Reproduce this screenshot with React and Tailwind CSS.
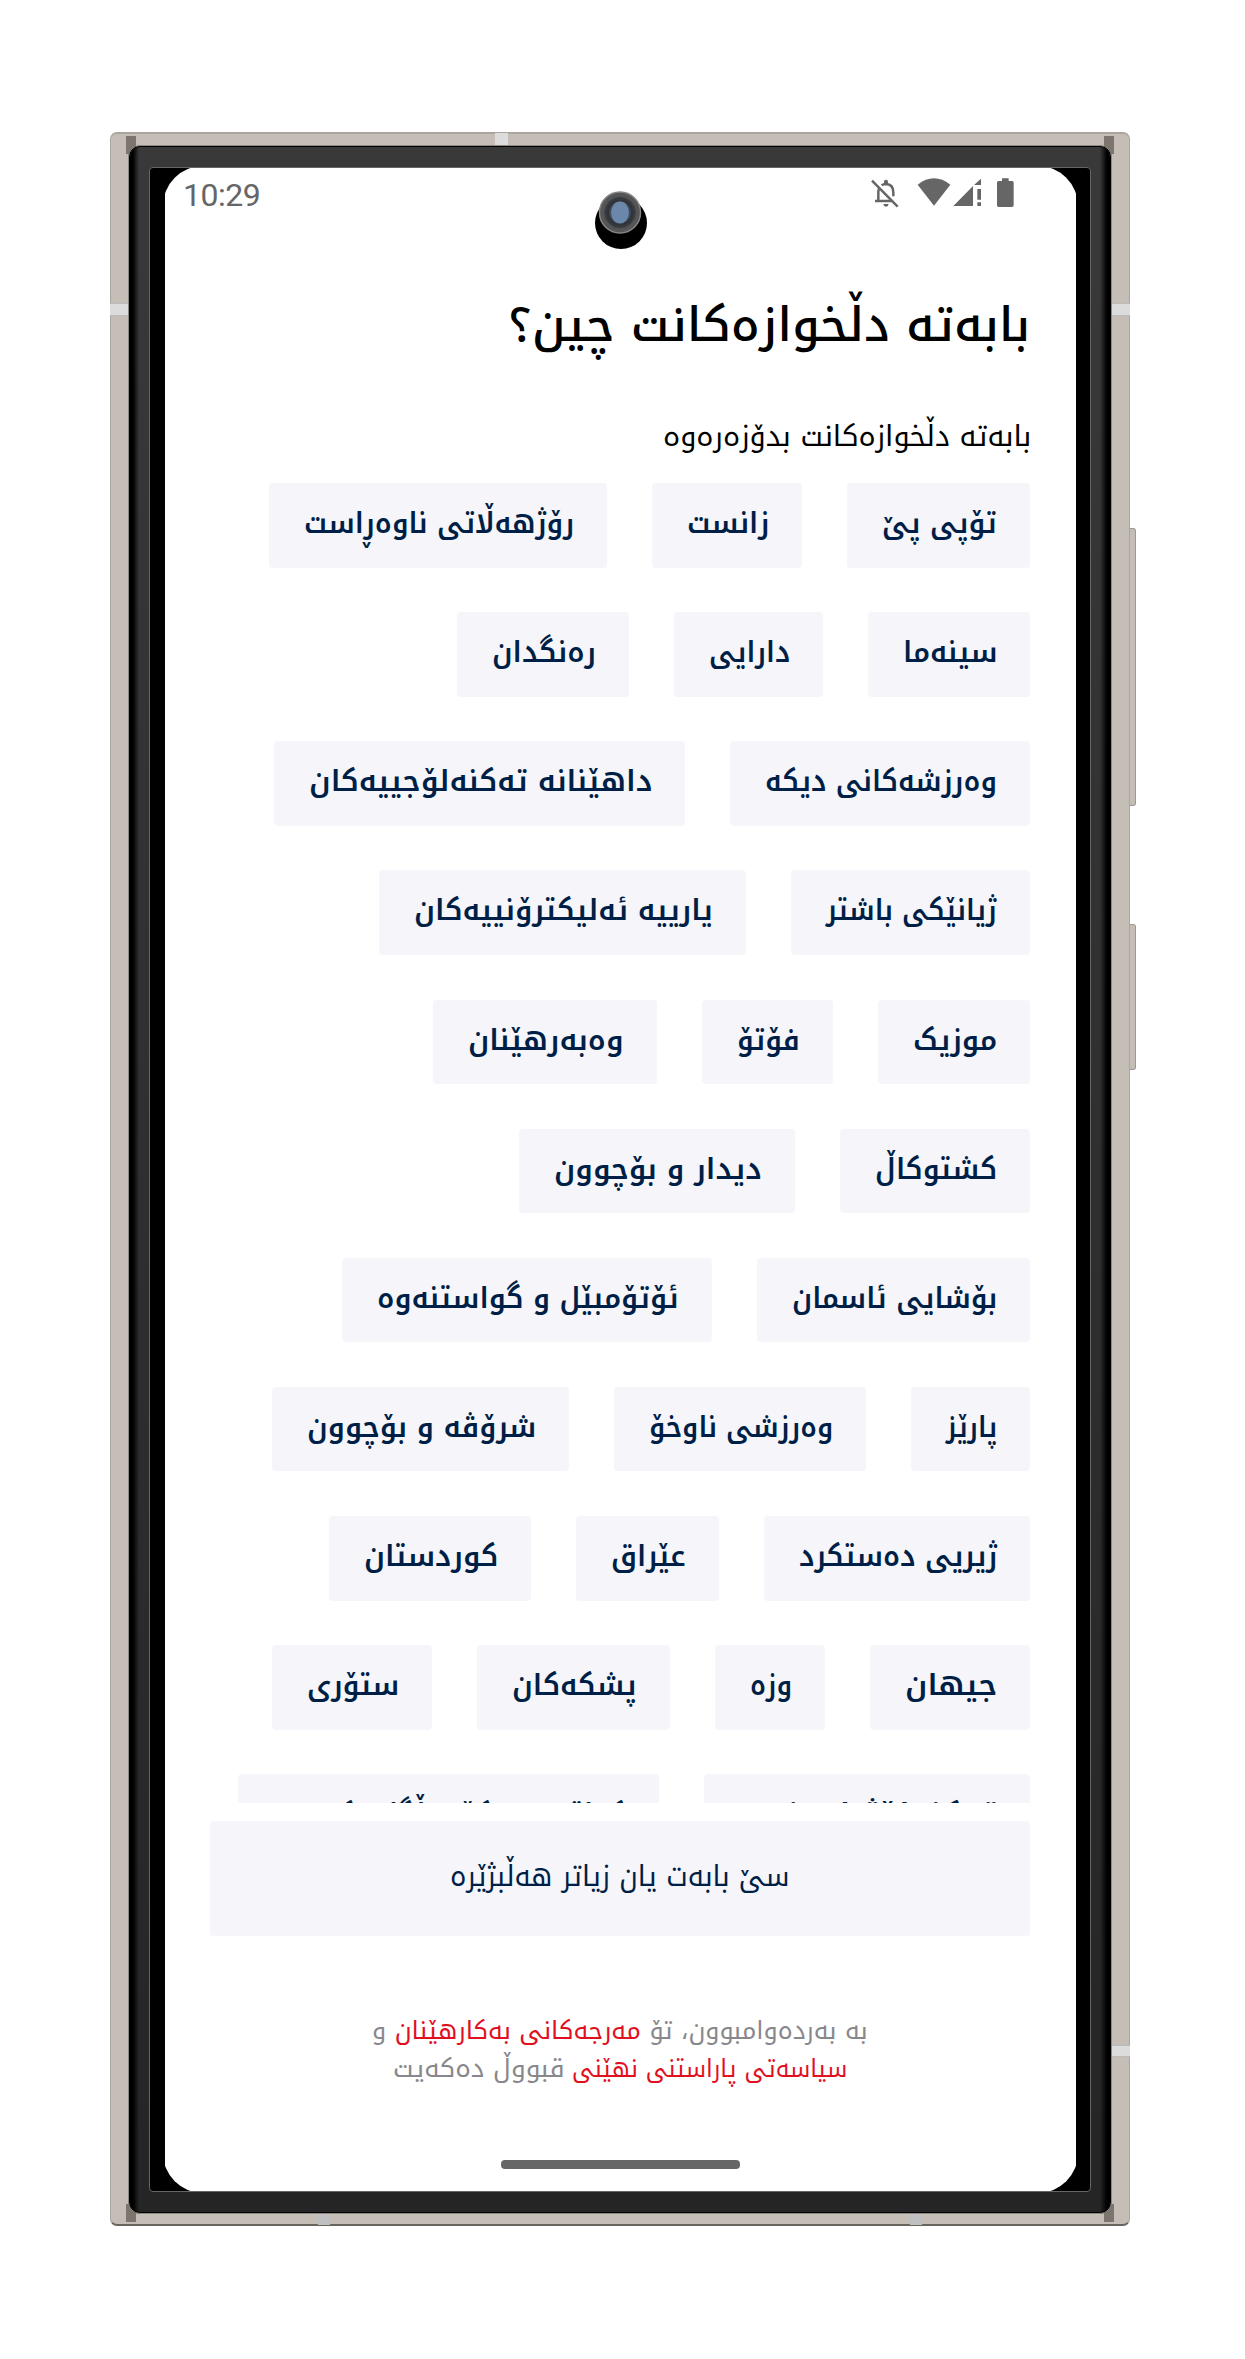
import { useLayoutEffect, useRef } from "react";

const kufi = "font-['Noto_Kufi_Arabic','DejaVu_Sans',sans-serif]";

// Stretches a single line of text so that it fills the width of its box.
function FitText({ children, className = "" }) {
  const box = useRef(null);
  const line = useRef(null);
  useLayoutEffect(() => {
    const fit = () => {
      const natural = line.current.offsetWidth;
      if (natural) line.current.style.transform = `scaleX(${box.current.clientWidth / natural})`;
    };
    fit();
    document.fonts?.ready.then(fit);
  }, []);
  return (
    <div ref={box} className={`flex justify-start ${className}`}>
      <span ref={line} className="shrink-0 origin-right whitespace-nowrap">
        {children}
      </span>
    </div>
  );
}

const rows = [
  [["w-[183px]", "تۆپی پێ"], ["w-[150px]", "زانست"], ["w-[338px]", "رۆژهەڵاتی ناوەڕاست"]],
  [["w-[162px]", "سینەما"], ["w-[149px]", "دارایی"], ["w-[172px]", "رەنگدان"]],
  [["w-[300px]", "وەرزشەکانی دیکە"], ["w-[411px]", "داهێنانە تەکنەلۆجییەکان"]],
  [["w-[239px]", "ژیانێکی باشتر"], ["w-[367px]", "یارییە ئەلیکترۆنییەکان"]],
  [["w-[152px]", "موزیک"], ["w-[131px]", "فۆتۆ"], ["w-[224px]", "وەبەرهێنان"]],
  [["w-[190px]", "کشتوکاڵ"], ["w-[276px]", "دیدار و بۆچوون"]],
  [["w-[273px]", "بۆشایی ئاسمان"], ["w-[370px]", "ئۆتۆمبێل و گواستنەوە"]],
  [["w-[119px]", "پارێز"], ["w-[252px]", "وەرزشی ناوخۆ"], ["w-[297px]", "شرۆڤە و بۆچوون"]],
  [["w-[266px]", "ژیریی دەستکرد"], ["w-[143px]", "عێراق"], ["w-[202px]", "کوردستان"]],
  [["w-[160px]", "جیهان"], ["w-[110px]", "وزە"], ["w-[193px]", "پشکەکان"], ["w-[160px]", "ستۆری"]],
  [["w-[326px]", "تەکنەلۆژیای نوێ"], ["w-[421px]", "کەلتوور و کۆمەڵگای کوردی"]],
];

function Chip({ width, label }) {
  return (
    <button className={`flex h-[84.500px] shrink-0 flex-col rounded-[4px] bg-[#f5f5fa] pr-[33px] pl-[35px] text-[#001f47] ${width}`}>
      <FitText className="w-full text-[29px] leading-[82px] font-semibold">{label}</FitText>
    </button>
  );
}

function StatusIcons() {
  return (
    <svg className="h-[34px] w-[145px]" viewBox="90 170 435 102" fill="#666">
      <g fill="none" stroke="#666" strokeWidth="7.500">
        <path d="M93 184 L170 262" />
        <path d="M102 245 H152" />
        <path d="M112 245 V218 Q112 211 115 207" />
        <path d="M122 198 Q127 194 135 194 Q157 195 157 219 V231" />
      </g>
      <path d="M129 193 V187 Q129 181 135 181 Q141 181 141 187 V193 Z" />
      <path d="M127 254 H143 Q142 262 135 262 Q128 262 127 254 Z" />
      <path d="M230 196 Q279 158 328 196 L279 259 Z" />
      <path d="M337 260 L396 200 V260 Z M399 197 L420 178 V197 Z" />
      <path d="M409 209 H420 V241 H409 Z M409 249 H420 V260 H409 Z" />
      <path d="M483 177 H503 V185 H514 Q518 185 518 190 V258 Q518 263 513 263 H473 Q468 263 468 258 V190 Q468 185 473 185 H483 Z" />
    </svg>
  );
}

function Camera() {
  return (
    <svg className="absolute top-[13px] left-[429px] h-[72px] w-[54px]" viewBox="0 0 54 72">
      <circle cx="27" cy="42" r="26" fill="#000" />
      <circle cx="26" cy="31.500" r="20.500" fill="#555" stroke="#858585" strokeWidth="1.500" />
      <circle cx="26" cy="31.500" r="15.500" fill="#343a43" stroke="#444" strokeWidth="1" />
      <circle cx="26" cy="31.500" r="12" fill="#3c4b60" stroke="#333" strokeWidth="2" />
      <ellipse cx="26" cy="31.500" rx="9" ry="11" fill="#6b88aa" />
    </svg>
  );
}

function Screen() {
  return (
    <div dir="rtl" className={`relative flex h-[2023px] w-[910px] flex-col ${kufi}`}>
      <div dir="ltr" className="flex h-[56px] items-start justify-between pt-[8px] pr-[59px] pl-[18px]">
        <span className="font-[Roboto,sans-serif] text-[32px] leading-[38px] tracking-[-0.5px] text-[#666]">10:29</span>
        <StatusIcons />
      </div>
      <Camera />

      <h1 className="mt-[58px] mr-[45px] w-[522px] text-black">
        <FitText className="text-[47px] leading-[88px] font-medium">بابەتە دڵخوازەکانت چین؟</FitText>
      </h1>
      <p className="mt-[39px] mr-[44px] w-[368px] text-black">
        <FitText className="text-[28.500px] leading-[56px] font-normal">بابەتە دڵخوازەکانت بدۆزەرەوە</FitText>
      </p>

      <div className="mt-[18px] flex h-[1320px] flex-col gap-y-[44.650px] overflow-hidden pr-[45px]">
        {rows.map((row) => (
          <div key={row[0][1]} className="flex shrink-0 gap-x-[45px]">
            {row.map(([width, label]) => (
              <Chip key={label} width={width} label={label} />
            ))}
          </div>
        ))}
      </div>

      <button className="mx-[45px] mt-[18px] flex h-[115px] items-start justify-center rounded-[4px] bg-[#f5f5fa] text-[#001f47]">
        <FitText className="w-[340px] text-[29px] leading-[111px] font-normal">سێ بابەت یان زیاتر هەڵبژێرە</FitText>
      </button>

      <div className="mt-[76px] flex flex-col items-center text-[25px] leading-[38px] text-[#88888c]">
        <FitText className="w-[496px]">
          بە بەردەوامبوون، تۆ <span className="text-[#e0101f]">مەرجەکانی بەکارهێنان</span> و
        </FitText>
        <div className="flex gap-x-[7px]">
          <FitText className="w-[275px] text-[#e0101f]">سیاسەتی پاراستنی نهێنی</FitText>
          <FitText className="w-[172px]">قبووڵ دەکەیت</FitText>
        </div>
      </div>

      <div className="mt-auto mb-[22px] h-[9px] w-[239px] self-center rounded-[4px] bg-[#666]" />
    </div>
  );
}

export default function App() {
  return (
    <main className="flex h-[2359px] w-[1245px] overflow-hidden bg-white pt-[132px] pl-[110px]">
      <div className="relative h-[2094px] w-[1020px] rounded-[7px] border border-t-2 border-b-2 border-[#aaa59e] border-b-[#69645e] bg-[#c4beb7] pt-[11px] pl-[17px]">
        <i className="absolute top-[169px] -left-px h-[13px] w-[18px] border-y border-[#bbb] bg-[#dcdcdc]" />
        <i className="absolute top-[169px] -right-px h-[13px] w-[18px] border-y border-[#bbb] bg-[#dcdcdc]" />
        <i className="absolute -right-px bottom-[167px] h-[12px] w-[18px] border-y border-[#bbb] bg-[#dcdcdc]" />
        <i className="absolute -top-px left-[384px] h-[12px] w-[13px] bg-[#dcdcdc]" />
        <i className="absolute -bottom-px left-[207px] h-[13px] w-[12px] bg-[#bfc0c1]" />
        <i className="absolute right-[207px] -bottom-px h-[13px] w-[12px] bg-[#bfc0c1]" />
        <i className="absolute top-[2px] left-[15px] h-[18px] w-[10px] bg-[#7b756e]" />
        <i className="absolute top-[2px] right-[15px] h-[18px] w-[10px] bg-[#7b756e]" />
        <i className="absolute bottom-[2px] left-[15px] h-[18px] w-[10px] bg-[#7b756e]" />
        <i className="absolute right-[15px] bottom-[2px] h-[18px] w-[10px] bg-[#7b756e]" />
        <i className="absolute top-[394px] -right-[7px] h-[278px] w-[6px] rounded-r-[3px] border border-l-0 border-[#9d9891] bg-[#c4beb7]" />
        <i className="absolute top-[790px] -right-[7px] h-[146px] w-[6px] rounded-r-[3px] border border-l-0 border-[#9d9891] bg-[#c4beb7]" />

        <div className="relative h-[2069px] w-[984px] rounded-[12px] border border-[#8f8a84] bg-black p-px">
          <div className="h-full w-full rounded-[10px] bg-linear-to-b from-[#393939] to-[#252525]">
            <div className="h-full w-full rounded-[10px] bg-[linear-gradient(to_right,#000_0,#000_3px,transparent_9px,transparent_970px,#000_977px,#000_100%)] px-[19px] pt-[20px]">
              <div className="h-[2025px] w-[942px] overflow-hidden rounded-[4px] border border-[#666] bg-black pl-[15px]">
                <div className="h-[2023px] w-[911px] overflow-hidden">
                  <div className="-m-[2px] rounded-[40px] bg-white p-[2px]">
                    <Screen />
                  </div>
                </div>
              </div>
            </div>
          </div>
        </div>
      </div>
    </main>
  );
}
